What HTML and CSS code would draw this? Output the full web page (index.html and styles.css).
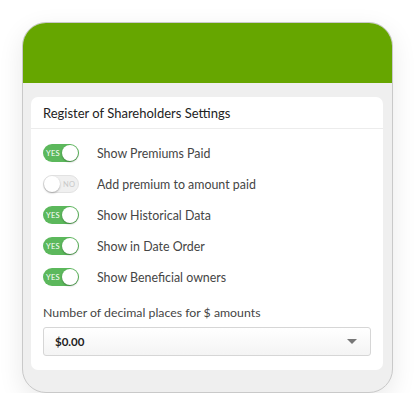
FILE: index.html
```html
<!DOCTYPE html>
<html>
<head>
<meta charset="utf-8">
<link rel="stylesheet" href="styles.css">
</head>
<body>
<div class="card">
  <div class="header"></div>
  <div class="body">
    <div class="panel">
      <div class="title">Register of Shareholders Settings</div>
      <div class="content">
        <div class="rows">
          <div class="row"><span class="toggle on"><span class="txt">YES</span><span class="knob"></span></span><span class="label">Show Premiums Paid</span></div>
          <div class="row"><span class="toggle off"><span class="knob"></span><span class="txt">NO</span></span><span class="label">Add premium to amount paid</span></div>
          <div class="row"><span class="toggle on"><span class="txt">YES</span><span class="knob"></span></span><span class="label">Show Historical Data</span></div>
          <div class="row"><span class="toggle on"><span class="txt">YES</span><span class="knob"></span></span><span class="label">Show in Date Order</span></div>
          <div class="row"><span class="toggle on"><span class="txt">YES</span><span class="knob"></span></span><span class="label">Show Beneficial owners</span></div>
        </div>
        <div class="field-label">Number of decimal places for $ amounts</div>
        <div class="select"><span class="value">$0.00</span><span class="caret"></span></div>
      </div>
    </div>
  </div>
</div>
</body>
</html>
```
FILE: styles.css
```css
html, body { margin: 0; padding: 0; background: #fff; }
body { font-family: "Lato", "Open Sans", sans-serif; color: #333; }
.card {
  margin: 22px 0 0 22px;
  width: 371px;
  height: 371px;
  box-sizing: border-box;
  border-radius: 24px;
  background: #efefef;
  border: 1px solid #c9c9c9;
  overflow: hidden;
  display: flex;
  flex-direction: column;
  box-shadow: 0 8px 26px rgba(0,0,0,0.09);
}
.header { height: 60px; background: #66a600; flex: none; }
.body { flex: 1; padding: 14px 9px 22px 8px; display: flex; }
.panel {
  flex: 1;
  background: #fff;
  border-radius: 7px;
  display: flex;
  flex-direction: column;
}
.title {
  height: 32px;
  box-sizing: border-box;
  border-bottom: 1px solid #ececec;
  padding: 0 12px;
  display: flex;
  align-items: center;
  font-size: 13px;
  color: #222;
}
.content { padding: 15px 12px 0 12px; }
.rows { display: flex; flex-direction: column; gap: 13px; }
.row { display: flex; align-items: center; height: 18px; }
.toggle {
  width: 36px; height: 18px; box-sizing: border-box;
  border-radius: 9px;
  display: flex; align-items: center;
  flex: none;
  margin-right: 18px;
}
.toggle.on { background: #5cb85c; justify-content: flex-end; padding-left: 3px; }
.toggle.off { background: #f0f0f0; border: 1px solid #e2e2e2; }
.txt { font-size: 7.5px; font-family: "Lato", sans-serif; letter-spacing: 0.2px; }
.toggle.on .txt { color: #fff; flex: 1; }
.toggle.off .txt { color: #c8c8c8; margin-left: 3px; }
.knob {
  width: 16px; height: 16px; border-radius: 50%;
  background: #fff;
  box-shadow: 0 1px 2px rgba(0,0,0,0.3);
  flex: none;
  margin-right: 1px;
}
.toggle.off .knob { margin: 0; }
.label { font-size: 12.4px; color: #454545; }
.field-label { font-size: 12.3px; color: #454545; margin-top: 19px; }
.select {
  margin-top: 7px;
  height: 29px; box-sizing: border-box;
  border: 1px solid #d6d6d6;
  border-radius: 3px;
  background: linear-gradient(#fff, #f4f4f4);
  display: flex; align-items: center; justify-content: space-between;
  padding: 0 13px 0 11px;
}
.value { font-size: 11.5px; font-weight: bold; color: #222; }
.caret {
  width: 0; height: 0;
  border-left: 5px solid transparent;
  border-right: 5px solid transparent;
  border-top: 5px solid #777;
}
```
